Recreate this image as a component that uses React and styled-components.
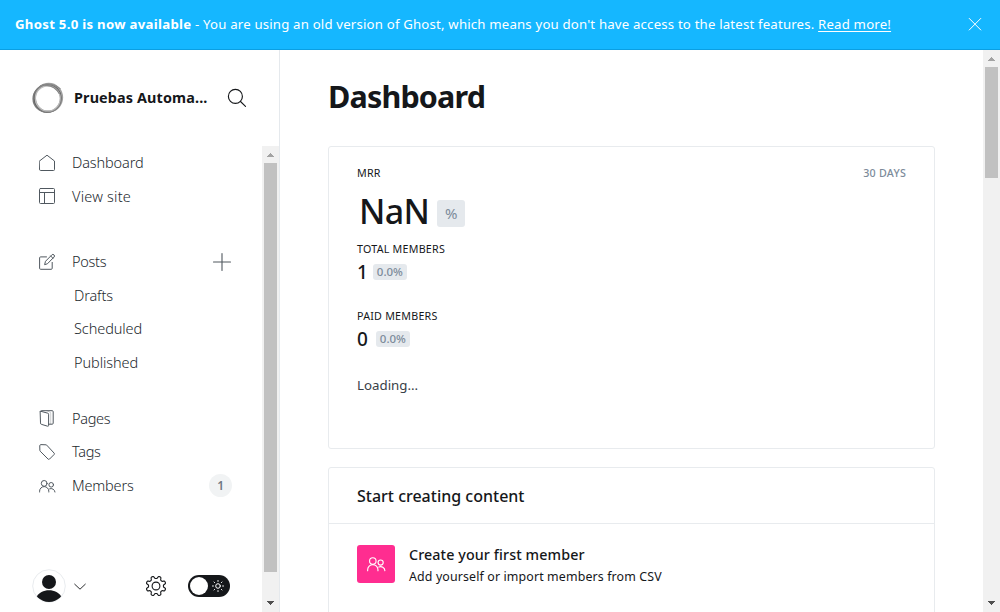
import React from "react";
import styled, { createGlobalStyle, css } from "styled-components";

const GlobalStyle = createGlobalStyle`
  *, *::before, *::after { box-sizing: border-box; }
  html, body { margin: 0; height: 100%; overflow: hidden; }
  body {
    background: #fff;
    color: #15171a;
    font-family: "Noto Sans", "Open Sans", sans-serif;
    font-size: 14px;
  }
  h1, h2, h3, p { margin: 0; }
  svg { display: block; flex: none; }
`;

const Page = styled.div`
  display: flex;
  flex-direction: column;
  width: 100%;
  height: 612px;
  overflow: hidden;
`;

const Banner = styled.header`
  display: flex;
  align-items: center;
  justify-content: space-between;
  flex: none;
  height: 50px;
  padding: 0 18px 2px 15px;
  background: #15b7ff;
  border-bottom: 1px solid #0b9fe2;
  color: #fff;
  font-size: 13.2px;
`;

const BannerText = styled.p`
  white-space: nowrap;
  letter-spacing: 0.19px;
  b { font-weight: 700; letter-spacing: 0.29px; }
  a { color: inherit; text-decoration: underline; text-underline-offset: 2px; }
`;

const Body = styled.div`
  display: flex;
  flex: 1;
  min-height: 0;
`;

const Sidebar = styled.aside`
  display: flex;
  flex-direction: column;
  flex: none;
  width: 280px;
  border-right: 1px solid #e5e9ed;
`;

const SiteHeader = styled.div`
  display: flex;
  align-items: center;
  flex: none;
  height: 96px;
  padding: 0 32px;
`;

const SiteName = styled.h3`
  flex: none;
  width: 142px;
  margin: 0 11px 0 10px;
  font-size: 14.4px;
  font-weight: 700;
  letter-spacing: 0.13px;
  line-height: 20px;
  white-space: nowrap;
`;

const SidebarScroll = styled.div`
  display: flex;
  flex: 1;
  min-height: 0;
`;

const SidebarContent = styled.div`
  display: flex;
  flex-direction: column;
  justify-content: space-between;
  width: 262px;
`;

const NavGroup = styled.nav`
  display: flex;
  flex-direction: column;
  margin-bottom: ${(p) => p.$gap || 0}px;
`;

const NavItem = styled.a`
  display: flex;
  align-items: center;
  height: 33.6px;
  padding: 0 30px 0 ${(p) => (p.$sub ? 74 : 39)}px;
  color: #23292e;
  font-size: 14.5px;
  font-weight: 350;
  letter-spacing: ${(p) => p.$ls ?? -0.3}px;
  svg { color: #50585f; }
`;

const NavLabel = styled.span`
  flex: 1;
  margin-left: ${(p) => (p.$sub ? 0 : 16)}px;
  padding-bottom: 1.1px;
  line-height: 20px;
`;

const Count = styled.span`
  display: flex;
  align-items: center;
  justify-content: center;
  width: 23px;
  height: 23px;
  border-radius: 50%;
  background: #f1f3f4;
  color: #6f777f;
  font-size: 12px;
  font-weight: 600;
`;

const SidebarFooter = styled.div`
  display: flex;
  align-items: center;
  height: 34px;
  margin-bottom: 9px;
  padding: 0 32px;
`;

const Chevron = styled.span`
  margin-left: 8px;
`;

const GearSlot = styled.span`
  margin: 0 21px 0 59px;
`;

const Toggle = styled.span`
  display: flex;
  align-items: center;
  justify-content: space-between;
  width: 42px;
  height: 22px;
  padding: 0 6px 0 2px;
  border-radius: 11px;
  background: #15171a;
  color: #fff;
`;

const Knob = styled.span`
  width: 18px;
  height: 18px;
  border-radius: 50%;
  background: #fff;
`;

const Track = styled.div`
  display: flex;
  flex-direction: column;
  align-items: center;
  flex: none;
  width: 17px;
  background: #f1f1f1;
`;

const Thumb = styled.div`
  width: 13px;
  height: ${(p) => p.$size}px;
  background: #c1c1c1;
`;

const ArrowButton = styled.div`
  display: flex;
  align-items: center;
  justify-content: center;
  width: 17px;
  height: 17px;
  ${(p) => p.$end && css`margin-top: auto; padding-bottom: 1px;`}
`;

const Main = styled.main`
  flex: 1;
  min-width: 0;
  padding: 0 48px 0 48px;
  overflow: hidden;
`;

const Title = styled.h1`
  height: 96px;
  font-size: 30.5px;
  font-weight: 700;
  letter-spacing: -0.83px;
  line-height: 93px;
`;

const Card = styled.section`
  height: ${(p) => p.$height}px;
  margin-bottom: 18px;
  border: 1px solid #e8ebee;
  border-radius: 3px;
`;

const StatsCard = styled(Card)`
  display: flex;
  justify-content: space-between;
  padding: 0 28px;
`;

const Stats = styled.div`
  display: flex;
  flex-direction: column;
  padding-top: 16px;
`;

const Label = styled.div`
  height: 20px;
  color: ${(p) => (p.$muted ? "#7c8b9a" : "#15171a")};
  font-size: 10.7px;
  font-weight: ${(p) => (p.$muted ? 550 : 400)};
  letter-spacing: 0.24px;
  line-height: 20px;
  white-space: nowrap;
`;

const Range = styled(Label)`
  margin-top: 16px;
`;

const BigValue = styled.div`
  display: flex;
  align-items: center;
  height: 56px;
  padding: 0 0 0 2px;
  font-size: 34px;
  line-height: 56px;
  font-weight: 500;
  letter-spacing: -0.7px;
`;

const Value = styled.div`
  display: flex;
  align-items: center;
  height: 25px;
  margin-bottom: 22px;
  font-size: 19px;
  font-weight: 500;
  letter-spacing: ${(p) => p.$ls || 0}px;
`;

const Pill = styled.span`
  display: flex;
  align-items: center;
  justify-content: center;
  width: ${(p) => (p.$large ? 28 : 34)}px;
  height: ${(p) => (p.$large ? 27 : 16)}px;
  margin-left: 8px;
  border-radius: 3px;
  background: #e5e9ed;
  color: #7c8b9a;
  font-size: ${(p) => (p.$large ? 15 : 11.5)}px;
  font-weight: ${(p) => (p.$large ? 400 : 500)};
  letter-spacing: 0;
  ${(p) => p.$large && css`margin-top: 4px;`}
`;

const Loading = styled.p`
  color: #394047;
  font-size: 13.3px;
  line-height: 24px;
`;

const CardTitle = styled.h2`
  height: 56px;
  padding-left: 28px;
  border-bottom: 1px solid #e8ebee;
  font-size: 16px;
  font-weight: 500;
  line-height: 56px;
`;

const Task = styled.div`
  display: flex;
  padding: 21px 28px;
`;

const TaskIcon = styled.span`
  display: flex;
  align-items: center;
  justify-content: center;
  width: 38px;
  height: 38px;
  margin-right: 14px;
  border-radius: 3px;
  background: #ff2d90;
  color: #fff;
`;

const TaskTitle = styled.h3`
  font-size: 14.3px;
  font-weight: 500;
  letter-spacing: 0.1px;
  line-height: 20px;
  white-space: nowrap;
`;

const TaskText = styled.p`
  padding-top: 1px;
  font-size: 12.4px;
  letter-spacing: 0.13px;
  line-height: 22px;
  white-space: nowrap;
`;

function Icon({ size = 17, box = 17, width = 1, children }) {
  return (
    <svg width={size} height={size} viewBox={`0 0 ${box} ${box}`} fill="none" stroke="currentColor"
      strokeWidth={width} strokeLinecap="round" strokeLinejoin="round">
      {children}
    </svg>
  );
}

const HomeIcon = () => (
  <Icon><path d="M.5 7 8 1.200l7.500 5.800v8.500a1 1 0 0 1-1 1h-13a1 1 0 0 1-1-1z" /></Icon>
);

const SiteIcon = () => (
  <Icon><rect x=".5" y=".5" width="15" height="15" rx="1" /><path d="M.5 4.500h15M5.500 4.500v11" /></Icon>
);

const PostsIcon = () => (
  <Icon>
    <path d="M7.500 3.900H1.600a1 1 0 0 0-1 1v10.400a1 1 0 0 0 1 1h10.600a1 1 0 0 0 1-1V9.400" />
    <path d="M5.700 11.300l.8-3 6.300-6.400a1.500 1.500 0 0 1 2.200 2.200L8.700 10.500z" />
    <path d="M11.700 3l2.200 2.200" />
  </Icon>
);

const PagesIcon = () => (
  <Icon>
    <path d="M1.500 1.200l7.300 2a1 1 0 0 1 .8 1v11.200a.8.8 0 0 1-1 .8l-6.300-1.900a1 1 0 0 1-.8-1z" />
    <path d="M1.700 1.100A1 1 0 0 1 2.500.7h10.700a1 1 0 0 1 1 1v11.500a1 1 0 0 1-1 1H9.800" />
    <path d="M8 .8l3 1.400a1 1 0 0 1 .7 1v10.500" strokeWidth=".3" />
  </Icon>
);

const TagIcon = () => (
  <Icon><path transform="translate(0 .9)" d="M.8 1.600A1 1 0 0 1 1.700.7L7 .9a1 1 0 0 1 .7.3l7.400 8a1 1 0 0 1 0 1.400l-4.600 4.600a1 1 0 0 1-1.400 0L1.200 7.300a1 1 0 0 1-.3-.6z" /></Icon>
);

const MembersIcon = ({ size = 17, drop = 1 }) => (
  <Icon size={size}>
    <g transform={`translate(0 ${drop})`}>
      <circle cx="5.200" cy="5.400" r="2.900" />
      <path d="M.6 14v-.8a4.600 4.600 0 0 1 9.200 0v.8" />
      <circle cx="12.200" cy="6.800" r="2.300" />
      <path d="M10.600 10.800a3.800 3.800 0 0 1 5.400 3.200" />
    </g>
  </Icon>
);

const PlusIcon = () => (
  <Icon size={19} box={19} width={1.1}><path d="M9 1.500v17M.5 10h17" /></Icon>
);

const SearchIcon = () => (
  <Icon size={20} box={20} width={1.15}><circle cx="8.400" cy="8.400" r="7" /><path d="M13.500 13.500l5 4.800" /></Icon>
);

const CloseIcon = () => (
  <Icon size={14} box={14}><path d="M1.200 1.400l11.600 11.600M12.800 1.400L1.200 13" /></Icon>
);

const ChevronIcon = () => (
  <Icon size={12} box={12} width={.9}><path d="M.7 4.200L6 9.200l5.300-5" /></Icon>
);

const GearIcon = () => {
  const points = [];
  for (let i = 0; i < 96; i += 1) {
    const angle = (i / 96) * Math.PI * 2;
    const radius = 8.7 + 1.3 * Math.tanh(2.2 * Math.cos(8 * angle + Math.PI));
    points.push(`${(11 + radius * Math.cos(angle)).toFixed(2)} ${(11 + radius * Math.sin(angle)).toFixed(2)}`);
  }
  return (
    <Icon size={22} box={22} width={1.1}>
      <path d={`M${points.join("L")}Z`} />
      <circle cx="11" cy="11" r="3.900" />
    </Icon>
  );
};

const SunIcon = () => (
  <Icon size={12} box={12} width={1}>
    <circle cx="6" cy="6" r="2.300" />
    <path d="M6 .5v.9M6 10.600v.9M.5 6h.9M10.600 6h.9M2 2l.6.6M9.400 9.400l.6.6M2 10l.6-.6M9.400 2.600L10 2" />
  </Icon>
);

const Logo = () => (
  <svg width="32" height="32" viewBox="0 0 32 32" fill="none">
    <circle cx="15.500" cy="16.300" r="13.500" stroke="#444" strokeWidth="1.900" opacity=".85" />
    <ellipse cx="15" cy="16.800" rx="13.900" ry="13.500" stroke="#7a7a7a" strokeWidth="1.400" />
    <ellipse cx="16.800" cy="15.600" rx="13.600" ry="14" stroke="#888" strokeWidth="1.500" opacity=".8" />
    <ellipse cx="15.800" cy="16.400" rx="12.400" ry="12.600" stroke="#bbb" strokeWidth="1.200" />
    <path d="M8 4C13 1.200 22 1.500 28.500 7M13 3.400c6-.4 11 2.600 14.600 8.600" stroke="#888" strokeWidth="1.100" />
  </svg>
);

const Avatar = () => (
  <svg width="34" height="34" viewBox="0 0 34 34">
    <defs><clipPath id="avatar"><circle cx="17" cy="17" r="16" /></clipPath></defs>
    <circle cx="17" cy="17" r="16.300" fill="#fff" stroke="#e8ebee" strokeWidth="1" />
    <circle cx="17" cy="13" r="7" fill="#15171a" />
    <path d="M4 28.500C7 23.500 11.500 21.300 17 21.300S27 23.500 30 28.500L25 34H9z" fill="#15171a" clipPath="url(#avatar)" />
  </svg>
);

function Scrollbar({ size }) {
  return (
    <Track>
      <ArrowButton>
        <svg width="7" height="4" viewBox="0 0 7 4" shapeRendering="crispEdges"><path d="M3.500 0L7 4H0z" fill="#a3a3a3" /></svg>
      </ArrowButton>
      <Thumb $size={size} />
      <ArrowButton $end>
        <svg width="7" height="4" viewBox="0 0 7 4" shapeRendering="crispEdges"><path d="M0 0h7L3.500 4z" fill="#505050" /></svg>
      </ArrowButton>
    </Track>
  );
}

function NavLink({ icon, label, sub, ls, children }) {
  return (
    <NavItem $sub={sub} $ls={ls}>
      {icon}
      <NavLabel $sub={sub}>{label}</NavLabel>
      {children}
    </NavItem>
  );
}

export default function App() {
  return (
    <Page>
      <GlobalStyle />
      <Banner>
        <BannerText>
          <b>Ghost 5.0 is now available</b> - You are using an old version of Ghost, which means you don't have access to the latest features. <a>Read more!</a>
        </BannerText>
        <CloseIcon />
      </Banner>
      <Body>
        <Sidebar>
          <SiteHeader>
            <Logo />
            <SiteName>Pruebas Automa...</SiteName>
            <SearchIcon />
          </SiteHeader>
          <SidebarScroll>
            <SidebarContent>
              <div>
                <NavGroup $gap={31.5}>
                  <NavLink icon={<HomeIcon />} label="Dashboard" ls={-0.13} />
                  <NavLink icon={<SiteIcon />} label="View site" ls={0.22} />
                </NavGroup>
                <NavGroup $gap={22.5}>
                  <NavLink icon={<PostsIcon />} label="Posts"><PlusIcon /></NavLink>
                  <NavLink sub label="Drafts" ls={-0.15} />
                  <NavLink sub label="Scheduled" ls={-0.08} />
                  <NavLink sub label="Published" ls={-0.08} />
                </NavGroup>
                <NavGroup>
                  <NavLink icon={<PagesIcon />} label="Pages" />
                  <NavLink icon={<TagIcon />} label="Tags" />
                  <NavLink icon={<MembersIcon />} label="Members" ls={-0.18}><Count>1</Count></NavLink>
                </NavGroup>
              </div>
              <SidebarFooter>
                <Avatar />
                <Chevron><ChevronIcon /></Chevron>
                <GearSlot><GearIcon /></GearSlot>
                <Toggle><Knob /><SunIcon /></Toggle>
              </SidebarFooter>
            </SidebarContent>
            <Scrollbar size={409} />
          </SidebarScroll>
        </Sidebar>
        <Main>
          <Title>Dashboard</Title>
          <StatsCard $height={303}>
            <Stats>
              <Label>MRR</Label>
              <BigValue>NaN<Pill $large>%</Pill></BigValue>
              <Label>TOTAL MEMBERS</Label>
              <Value $ls={-3}>1<Pill>0.0%</Pill></Value>
              <Label>PAID MEMBERS</Label>
              <Value>0<Pill>0.0%</Pill></Value>
              <Loading>Loading...</Loading>
            </Stats>
            <Range $muted>30 DAYS</Range>
          </StatsCard>
          <Card $height={200}>
            <CardTitle>Start creating content</CardTitle>
            <Task>
              <TaskIcon><MembersIcon size={19} drop={0} /></TaskIcon>
              <div>
                <TaskTitle>Create your first member</TaskTitle>
                <TaskText>Add yourself or import members from CSV</TaskText>
              </div>
            </Task>
          </Card>
        </Main>
        <Scrollbar size={111} />
      </Body>
    </Page>
  );
}
